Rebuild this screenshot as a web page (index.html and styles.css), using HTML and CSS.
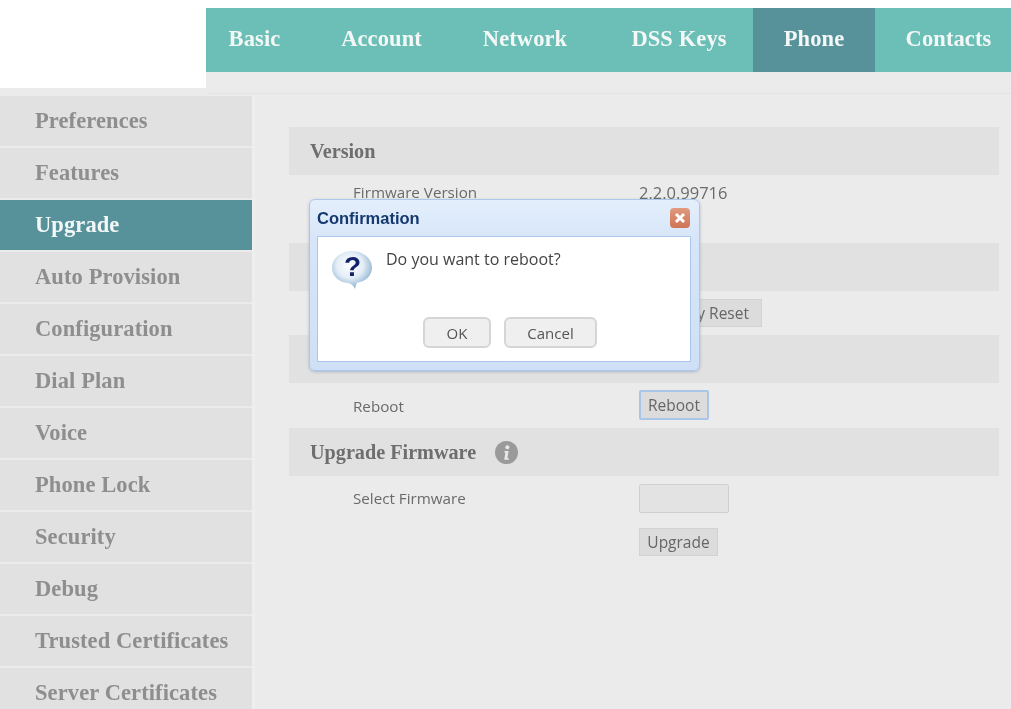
FILE: index.html
```html
<!DOCTYPE html>
<html lang="en">
<head>
  <meta charset="UTF-8">
  <title>Phone - Upgrade</title>
  <link rel="stylesheet" href="styles.css">
</head>
<body>
  <div class="page">
    <header class="top">
      <div class="logo-box"></div>
      <div class="top-right">
        <nav class="tabs">
          <a class="tab tab-basic">Basic</a>
          <a class="tab tab-account">Account</a>
          <a class="tab tab-network">Network</a>
          <a class="tab tab-dss">DSS Keys</a>
          <a class="tab tab-phone active">Phone</a>
          <a class="tab tab-contacts">Contacts</a>
        </nav>
      </div>
    </header>

    <div class="main">
      <aside class="side">
        <a class="side-item">Preferences</a>
        <a class="side-item">Features</a>
        <a class="side-item active">Upgrade</a>
        <a class="side-item">Auto Provision</a>
        <a class="side-item">Configuration</a>
        <a class="side-item">Dial Plan</a>
        <a class="side-item">Voice</a>
        <a class="side-item">Phone Lock</a>
        <a class="side-item">Security</a>
        <a class="side-item">Debug</a>
        <a class="side-item">Trusted Certificates</a>
        <a class="side-item">Server Certificates</a>
      </aside>

      <section class="content">
        <h2 class="sec-title">Version</h2>
        <div class="row row-version">
          <span class="row-label">Firmware Version</span>
          <span class="row-value">2.2.0.99716</span>
        </div>

        <h2 class="sec-title sec-reset"></h2>
        <div class="row row-reset">
          <span class="row-label"></span>
          <span class="row-value"><button class="btn btn-reset">Factory Reset</button></span>
        </div>

        <h2 class="sec-title"></h2>
        <div class="row row-reboot">
          <span class="row-label">Reboot</span>
          <span class="row-value"><button class="btn btn-focus">Reboot</button></span>
        </div>

        <h2 class="sec-title">Upgrade Firmware
          <svg class="info" width="23" height="23" viewBox="0 0 22 22">
            <circle cx="11" cy="11" r="11" fill="#9a9a9a"/>
            <circle cx="11.800" cy="6" r="1.900" fill="#e8e8e8"/>
            <path d="M9 9.500h4l-1.200 7h1.400v1.500H8.800l1.200-7H9z" fill="#e8e8e8"/>
          </svg>
        </h2>
        <div class="row row-file">
          <span class="row-label">Select Firmware</span>
          <span class="row-value"><span class="file-box"></span></span>
        </div>
        <div class="row row-upgrade">
          <span class="row-label"></span>
          <span class="row-value"><button class="btn btn-upgrade">Upgrade</button></span>
        </div>
      </section>
    </div>
  </div>

  <div class="dialog">
    <div class="dialog-head">
      <span class="dialog-title">Confirmation</span>
      <span class="dialog-close">
        <svg width="14" height="14" viewBox="0 0 14 14">
          <path d="M3 3l8 8M11 3l-8 8" stroke="#fff" stroke-width="3"/>
        </svg>
      </span>
    </div>
    <div class="dialog-body">
      <div class="dialog-msg">
        <svg class="ask" width="44" height="44" viewBox="0 0 44 44">
          <defs>
            <radialGradient id="bubble" cx="45%" cy="38%" r="60%">
              <stop offset="0" stop-color="#ffffff"/>
              <stop offset="0.55" stop-color="#e4eef7"/>
              <stop offset="1" stop-color="#8fb3d0"/>
            </radialGradient>
          </defs>
          <path d="M22 2C11 2 2 9.500 2 18.500c0 9 7.500 15 16 15.500 3.500 .5 5.500 3 7 6 .5-2.500 1-4.500 2-6.300C36 32.500 42 26.500 42 18.500 42 9.500 33 2 22 2z" fill="url(#bubble)"/>
          <text class="ask-mark" x="22.500" y="27" text-anchor="middle">?</text>
        </svg>
        <span class="dialog-text">Do you want to reboot?</span>
      </div>
      <div class="dialog-btns">
        <button class="dlg-btn dlg-ok">OK</button>
        <button class="dlg-btn dlg-cancel">Cancel</button>
      </div>
    </div>
  </div>
</body>
</html>
```

FILE: styles.css
```css
html, body {
  margin: 0;
  padding: 0;
  height: 100%;
  overflow: hidden;
}

body {
  background-color: #ebebeb;
  font-family: "Open Sans", "Liberation Sans", sans-serif;
  color: #666;
  position: relative;
}

.page {
  height: 709px;
  overflow: hidden;
  filter: blur(0.5px);
}

/* top */
.top {
  display: flex;
  height: 96px;
}

.logo-box {
  width: 206px;
  height: 88px;
  background-color: #fff;
}

.top-right {
  flex: 1;
  height: 94px;
  padding-top: 8px;
  box-sizing: border-box;
  background: linear-gradient(#fff 8px, #ebebeb 8px);
  border-bottom: 1px solid #e4e4e4;
}

.tabs {
  display: flex;
  height: 64px;
  background-color: #6cbfb6;
}

.tab {
  display: flex;
  align-items: center;
  justify-content: center;
  padding-bottom: 3px;
  box-sizing: border-box;
  font-family: "Liberation Serif", serif;
  font-weight: bold;
  font-size: 22.500px;
  letter-spacing: 0.1px;
  color: #f3f8f7;
}

.tab-basic { width: 97px; }
.tab-account { width: 157px; }
.tab-network { width: 130px; }
.tab-dss { width: 163px; padding-left: 15px; }
.tab-phone { width: 122px; }
.tab-contacts { width: 136px; padding-left: 11px; }

.tab.active {
  background-color: #57929b;
}

/* left menu */
.main {
  display: flex;
}

.side {
  width: 255px;
  display: flex;
  flex-direction: column;
  gap: 2px;
  flex-shrink: 0;
  box-sizing: border-box;
  border-right: 3px solid #eeeeee;
}

.side-item {
  display: flex;
  align-items: center;
  height: 50px;
  padding-left: 35px;
  background-color: #e1e1e1;
  font-family: "Liberation Serif", serif;
  font-weight: bold;
  font-size: 22.500px;
  letter-spacing: 0.1px;
  color: #8e8e8e;
}

.side-item.active {
  background-color: #57929b;
  color: #f3f8f7;
}

/* right side */
.content {
  flex: 1;
  padding: 31px 12px 0 34px;
}

.sec-title {
  display: flex;
  align-items: center;
  margin: 0;
  height: 48px;
  padding-left: 21px;
  background-color: #e1e1e1;
  font-family: "Liberation Serif", serif;
  font-weight: bold;
  font-size: 20.200px;
  color: #6e6e6e;
}

.sec-reset { margin-top: 34px; }

.info {
  margin-left: 19px;
}

.row {
  display: flex;
  align-items: center;
  font-size: 15.200px;
  color: #6a6a6a;
}

.row-version { height: 34px; }
.row-reset { height: 44px; }
.row-reboot { height: 45px; }
.row-file { height: 44px; }
.row-upgrade { height: 44px; }

.row-label {
  width: 350px;
  padding-left: 64px;
  box-sizing: border-box;
  flex-shrink: 0;
}

.row-value {
  font-size: 16.500px;
}

.btn {
  font-family: inherit;
  font-size: 15.500px;
  color: #666;
  height: 28px;
  padding: 0 8px;
  background-color: #dcdcdc;
  border: 1px solid #d2d2d2;
  display: block;
}

.btn-reset {
  width: 123px;
  padding: 0;
}

.btn-focus {
  height: 30px;
  width: 70px;
  margin-bottom: 1px;
  border: 2px solid #a9c6e6;
  border-radius: 2px;
  padding: 0;
}

.btn-upgrade {
  width: 79px;
  padding: 0;
}

.file-box {
  display: block;
  width: 88px;
  height: 27px;
  background-color: #e3e3e3;
  border: 1px solid #cfcfcf;
  border-radius: 2px;
}

/* dialog */
.dialog {
  position: absolute;
  left: 309px;
  top: 199px;
  width: 391px;
  height: 172px;
  box-sizing: border-box;
  padding: 0 8px 8px 7px;
  border: 1px solid #a9c8ec;
  border-radius: 6px;
  background: linear-gradient(#e4effc, #d6e5f8 40px, #cfe0f6);
  box-shadow: 0 1px 3px rgba(120, 140, 170, 0.5);
  display: flex;
  flex-direction: column;
  filter: blur(0.4px);
}

.dialog-head {
  display: flex;
  align-items: center;
  justify-content: space-between;
  height: 36px;
  flex-shrink: 0;
}

.dialog-title {
  font-family: "Liberation Sans", sans-serif;
  font-weight: bold;
  font-size: 16.500px;
  color: #15396e;
}

.dialog-close {
  display: flex;
  align-items: center;
  justify-content: center;
  width: 20px;
  height: 20px;
  margin-right: 1px;
  border-radius: 4px;
  background: linear-gradient(#e09a80, #cf7354);
}

.dialog-body {
  flex: 1;
  background-color: #fff;
  border: 1px solid #a9c8ec;
  padding: 12px 12px 13px;
  display: flex;
  flex-direction: column;
  justify-content: space-between;
}

.dialog-msg {
  display: flex;
  align-items: flex-start;
  gap: 12px;
}

.ask {
  flex-shrink: 0;
}

.ask-mark {
  font-family: "Liberation Sans", sans-serif;
  font-weight: bold;
  font-size: 28px;
  fill: #14236e;
}

.dialog-text {
  font-family: "Open Sans", sans-serif;
  font-size: 16px;
  color: #444;
  margin-top: -1px;
}

.dialog-btns {
  display: flex;
  justify-content: center;
  gap: 13px;
  padding-left: 12px;
}

.dlg-btn {
  height: 31px;
  font-family: "Open Sans", sans-serif;
  font-size: 15px;
  color: #555;
  background-color: #efefef;
  border: 2px solid #d5d5d5;
  border-radius: 6px;
}

.dlg-ok { width: 68px; }
.dlg-cancel { width: 93px; }
```
